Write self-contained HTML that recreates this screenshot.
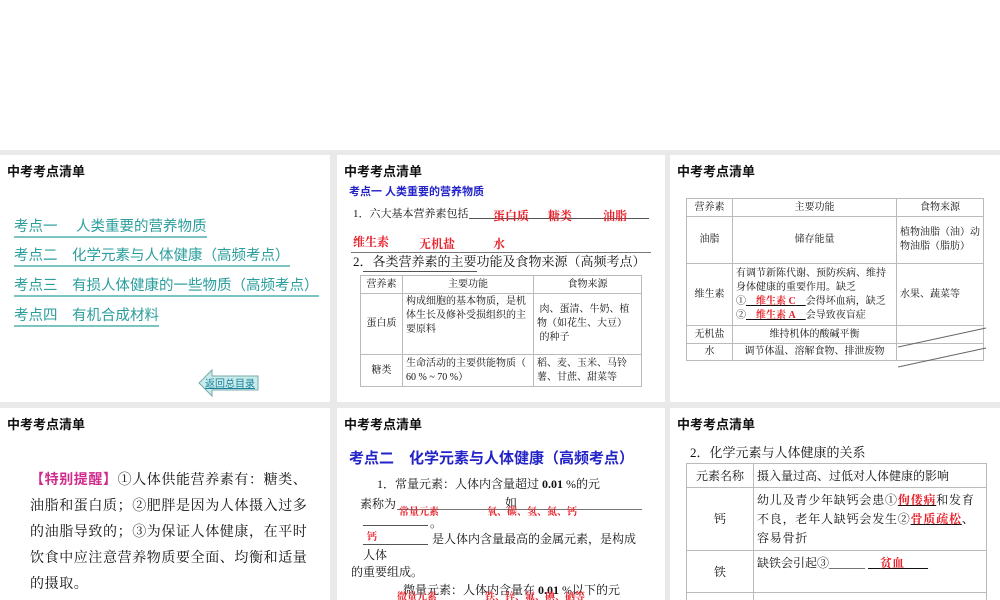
<!DOCTYPE html>
<html><head><meta charset="utf-8"><style>
*{margin:0;padding:0;box-sizing:border-box}
body{width:1000px;height:600px;background:#e9e9e9;position:relative;overflow:hidden;font-family:"Liberation Sans","Noto Sans CJK SC",sans-serif;color:#111}
.top{position:absolute;left:0;top:0;width:1000px;height:150px;background:#fff}
.p{position:absolute;background:#fff;overflow:hidden}
.a{position:absolute;white-space:nowrap}
.t{font-size:13px;font-weight:bold;left:7px;top:6px}
.s{font-family:"Liberation Serif","Noto Serif CJK SC",serif}
.lk{color:#2a9d9d;font-size:14.5px;border-bottom:2px solid #7cc4c4;line-height:18px}
.red{color:#e8202a;font-weight:bold;font-family:"Liberation Serif","Noto Serif CJK SC",serif}
table{position:absolute;border-collapse:collapse;font-family:"Liberation Serif","Noto Serif CJK SC",serif;font-size:10px}
td{border:1px solid #bbb;padding:1px 3px;line-height:14px;vertical-align:middle}
.c{text-align:center}
</style></head><body>
<div class="top"></div>

<div class="p" style="left:0;top:155px;width:330px;height:247px">
<div class="a t">中考考点清单</div>
<div class="a lk" style="left:14px;top:63px">考点一　 人类重要的营养物质</div>
<div class="a lk" style="left:14px;top:92px">考点二　化学元素与人体健康（高频考点）</div>
<div class="a lk" style="left:14px;top:122px">考点三　有损人体健康的一些物质（高频考点）</div>
<div class="a lk" style="left:14px;top:152px">考点四　有机合成材料</div>
<svg class="a" style="left:198px;top:213px" width="62" height="30"><polygon points="1,15 14,2 14,8 60,8 60,22 14,22 14,28" fill="#c8ecec" stroke="#7aaaaa"/></svg>
<div class="a" style="left:205px;top:220px;font-size:10px;color:#1a7f9a;text-decoration:underline">返回总目录</div>
</div>

<div class="p" style="left:337px;top:155px;width:328px;height:247px">
<div class="a t">中考考点清单</div>
<div class="a" style="left:12px;top:28px;font-size:11px;font-weight:bold;color:#2323c8">考点一  人类重要的营养物质</div>
<div class="a s" style="left:16px;top:50px;font-size:11px">1．六大基本营养素包括</div>
<div class="a" style="left:132px;top:63px;width:180px;border-top:1px solid #555"></div>
<div class="a red" style="left:156px;top:52px;font-size:12px">蛋白质</div>
<div class="a red" style="left:211px;top:52px;font-size:12px">糖类</div>
<div class="a red" style="left:266px;top:52px;font-size:12px">油脂</div>
<div class="a red" style="left:16px;top:78px;font-size:12px">维生素</div>
<div class="a red" style="left:82px;top:80px;font-size:12px">无机盐</div>
<div class="a red" style="left:156px;top:80px;font-size:12px">水</div>
<div class="a" style="left:14px;top:97px;width:300px;border-top:1px solid #777"></div>
<div class="a s" style="left:16px;top:96px;font-size:13px">2．各类营养素的主要功能及食物来源（高频考点）</div>
<div class="a" style="left:26px;top:116px;width:114px;border-top:1px solid #555"></div>
<table style="left:23px;top:120px;width:282px">
<tr style="height:18px"><td class="c" style="width:42px">营养素</td><td class="c" style="width:131px">主要功能</td><td class="c">食物来源</td></tr>
<tr style="height:61px"><td class="c">蛋白质</td><td style="vertical-align:top">构成细胞的基本物质，是机体生长及修补受损组织的主要原料</td><td>&nbsp;肉、蛋清、牛奶、植物（如花生、大豆）<br>&nbsp;的种子</td></tr>
<tr style="height:32px"><td class="c">糖类</td><td>生命活动的主要供能物质（ 60 % ~ 70 %）</td><td>稻、麦、玉米、马铃薯、甘蔗、甜菜等</td></tr>
</table>
</div>

<div class="p" style="left:670px;top:155px;width:330px;height:247px">
<div class="a t">中考考点清单</div>
<table style="left:16px;top:43px;width:298px">
<tr style="height:18px"><td class="c" style="width:46px">营养素</td><td class="c" style="width:164px">主要功能</td><td class="c">食物来源</td></tr>
<tr style="height:47px"><td class="c">油脂</td><td class="c">储存能量</td><td>植物油脂（油）动物油脂（脂肪）</td></tr>
<tr style="height:62px"><td class="c">维生素</td><td>有调节新陈代谢、预防疾病、维持身体健康的重要作用。缺乏<br>①<u>　<span class="red">维生素 C</span>　</u>会得坏血病，缺乏<br>②<u>　<span class="red">维生素 A</span>　</u>会导致夜盲症</td><td>水果、蔬菜等</td></tr>
<tr style="height:18px"><td class="c">无机盐</td><td class="c">维持机体的酸碱平衡</td><td></td></tr>
<tr style="height:17px"><td class="c">水</td><td class="c">调节体温、溶解食物、排泄废物</td><td></td></tr>
</table>
<svg class="a" style="left:228px;top:168px" width="90" height="50"><line x1="0" y1="24" x2="88" y2="5" stroke="#666"/><line x1="0" y1="44" x2="88" y2="25" stroke="#666"/></svg>
</div>

<div class="p" style="left:0;top:408px;width:330px;height:192px">
<div class="a t">中考考点清单</div>
<div class="a s" style="left:30px;top:58px;font-size:14px;line-height:26px;letter-spacing:0.6px"><span style="color:#d02a8c;font-weight:bold;font-family:'Liberation Sans','Noto Sans CJK SC',sans-serif">【特别提醒】</span>①人体供能营养素有：糖类、<br>油脂和蛋白质；②肥胖是因为人体摄入过多<br>的油脂导致的；③为保证人体健康，在平时<br>饮食中应注意营养物质要全面、均衡和适量<br>的摄取。</div>
</div>

<div class="p" style="left:337px;top:408px;width:328px;height:192px">
<div class="a t">中考考点清单</div>
<div class="a" style="left:12px;top:39px;font-size:15px;font-weight:bold;color:#2323c8">考点二　化学元素与人体健康（高频考点）</div>
<div class="a s" style="left:40px;top:67px;font-size:12px">1．常量元素：人体内含量超过 <b>0.01</b> %的元</div>
<div class="a s" style="left:23px;top:87px;font-size:12px">素称为</div>
<div class="a" style="left:60px;top:101px;width:245px;border-top:1px solid #777"></div>
<div class="a s" style="left:168px;top:86px;font-size:12px">如</div>
<div class="a red" style="left:62px;top:95px;font-size:10px">常量元素</div>
<div class="a red" style="left:150px;top:95px;font-size:10px">氧、碳、氢、氮、钙</div>
<div class="a" style="left:26px;top:117px;width:65px;border-top:1px solid #555"></div>
<div class="a s" style="left:93px;top:106px;font-size:12px">。</div>
<div class="a red" style="left:30px;top:120px;font-size:10px">钙</div>
<div class="a" style="left:26px;top:136px;width:65px;border-top:1px solid #555"></div>
<div class="a s" style="left:95px;top:122px;font-size:12px">是人体内含量最高的金属元素，是构成</div>
<div class="a s" style="left:26px;top:138px;font-size:12px">人体</div>
<div class="a s" style="left:14px;top:155px;font-size:12px">的重要组成。</div>
<div class="a s" style="left:66px;top:173px;font-size:12px">微量元素：人体内含量在 <b>0.01</b> %以下的元</div>
<div class="a red" style="left:60px;top:180px;font-size:10px">微量元素</div>
<div class="a red" style="left:148px;top:180px;font-size:10px">铁、锌、氟、碘、硒等</div>
</div>

<div class="p" style="left:670px;top:408px;width:330px;height:192px">
<div class="a t">中考考点清单</div>
<div class="a s" style="left:20px;top:34px;font-size:13px">2．化学元素与人体健康的关系</div>
<table style="left:16px;top:55px;width:301px;font-size:12px">
<tr style="height:24px"><td class="c" style="width:67px">元素名称</td><td>摄入量过高、过低对人体健康的影响</td></tr>
<tr style="height:63px"><td class="c">钙</td><td style="line-height:19px;letter-spacing:0.8px">幼儿及青少年缺钙会患①<u><span class="red">佝偻病</span></u>和发育<br>不良，老年人缺钙会发生②<u><span class="red">骨质疏松</span></u>、<br>容易骨折</td></tr>
<tr style="height:42px"><td class="c">铁</td><td style="vertical-align:top;padding-top:5px">缺铁会引起③______ <u>　<span class="red">贫血</span>　　</u></td></tr>
<tr style="height:20px"><td></td><td></td></tr>
</table>
</div>
</body></html>
